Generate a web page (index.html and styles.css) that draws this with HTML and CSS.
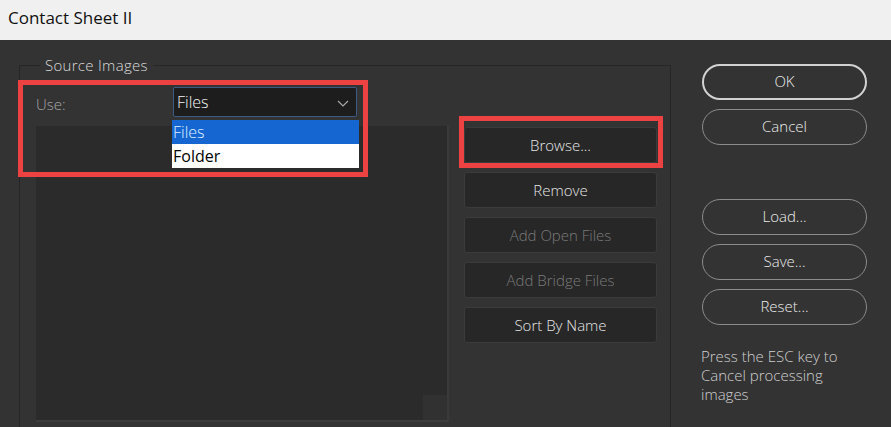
FILE: index.html
```html
<!DOCTYPE html>
<html>
<head>
<meta charset="utf-8">
<title>Contact Sheet II</title>
<link rel="stylesheet" href="styles.css">
</head>
<body>
<div class="titlebar">Contact Sheet II</div>
<div class="dialog">
  <fieldset class="group">
    <legend class="legend">Source Images</legend>
    <div class="group-grid">
      <div class="use-row">
        <span class="use-label">Use:</span>
        <div class="select">
          <span class="select-value">Files</span>
          <svg class="chevron" width="12" height="7" viewBox="0 0 12 7"><polyline points="1,1 6,6 11,1" fill="none" stroke="#a8a8a8" stroke-width="1.2"/></svg>
          <div class="menu">
            <div class="menu-item selected">Files</div>
            <div class="menu-item">Folder</div>
          </div>
        </div>
      </div>
      <div class="spacer"></div>
      <div class="listbox"><div class="corner"></div></div>
      <div class="buttons">
        <button class="btn">Browse...</button>
        <button class="btn">Remove</button>
        <button class="btn disabled">Add Open Files</button>
        <button class="btn disabled">Add Bridge Files</button>
        <button class="btn">Sort By Name</button>
      </div>
    </div>
  </fieldset>
  <div class="side">
    <button class="pill primary">OK</button>
    <button class="pill">Cancel</button>
    <button class="pill gap">Load...</button>
    <button class="pill">Save...</button>
    <button class="pill">Reset...</button>
    <p class="help">Press the ESC key to Cancel processing images</p>
  </div>
  <div class="mark mark-use"></div>
  <div class="mark mark-browse"></div>
</div>
</body>
</html>
```
FILE: styles.css
```css
* { box-sizing: border-box; }
html, body { margin: 0; padding: 0; overflow: hidden; }
body {
  width: 891px;
  height: 427px;
  font-family: "Open Sans", "Noto Sans", sans-serif;
  font-weight: 300;
  background: #333333;
}
.titlebar {
  height: 40px;
  background: #f0f0f0;
  color: #111;
  font-size: 17px;
  font-weight: 400;
  line-height: 36px;
  padding-left: 8px;
}
.dialog {
  position: relative;
  height: 387px;
  overflow: hidden;
  background: #333333;
  display: flex;
  align-items: flex-start;
}
.group {
  margin: 15px 0 0 19px;
  width: 652px;
  height: 372px;
  border: 1px solid #262626;
  border-bottom: none;
  padding: 12px 12px 0 16px;
  min-width: 0;
}
.legend {
  margin-left: 4px;
  padding: 0 5px;
  font-size: 15px;
  line-height: 20px;
  letter-spacing: 0.3px;
  color: #dcdcdc;
}
.group-grid {
  display: grid;
  grid-template-columns: 413px 193px;
  grid-template-rows: 30px 296px;
  column-gap: 15px;
  row-gap: 9px;
}
.use-row {
  display: flex;
  align-items: center;
}
.use-label {
  width: 137px;
  font-size: 15px;
  color: #a8a8a8;
  margin-top: 4px;
}
.select {
  position: relative;
  width: 184px;
  height: 30px;
  background: #1d1d1d;
  border: 1px solid #3e5a86;
  border-radius: 2px;
  display: flex;
  align-items: center;
  justify-content: space-between;
  padding: 0 7px 0 3px;
}
.select-value {
  color: #f4f4f4;
  font-size: 16px;
}
.chevron { margin-top: 2px; }
.menu {
  position: absolute;
  left: -2px;
  top: 32px;
  width: 187px;
  background: #fff;
  z-index: 2;
}
.menu-item {
  height: 24px;
  line-height: 24px;
  padding-left: 1px;
  font-size: 16px;
  font-weight: 400;
  color: #000;
}
.menu-item.selected {
  background: #1666d1;
  color: #dff2ff;
  font-weight: 300;
}
.listbox {
  position: relative;
  background: #2b2b2b;
  border-bottom: 2px solid #3c3c3c;
  border-right: 2px solid #3a3a3a;
}
.corner {
  position: absolute;
  right: 0;
  bottom: 0;
  width: 24px;
  height: 25px;
  background: #313131;
}
.buttons {
  display: flex;
  flex-direction: column;
  gap: 9px;
  margin-top: 1px;
}
.btn {
  height: 36px;
  background: #272727;
  border: 1px solid #3b3b3b;
  border-radius: 3px;
  color: #e6e6e6;
  font-family: inherit;
  font-weight: inherit;
  font-size: 15px;
  padding: 0;
}
.btn.disabled { color: #7a7a7a; }
.side {
  margin-left: 31px;
  padding-top: 24px;
  width: 165px;
  display: flex;
  flex-direction: column;
  gap: 9px;
}
.pill {
  height: 36px;
  border-radius: 18px;
  background: transparent;
  border: 1.5px solid #8c8c8c;
  color: #ececec;
  font-family: inherit;
  font-weight: inherit;
  font-size: 15px;
  padding: 0 0 2px 0;
}
.pill.primary { border: 2px solid #d2d2d2; }
.pill.gap { margin-top: 45px; }
.help {
  margin: 13px 0 0 -1px;
  width: 160px;
  font-size: 15px;
  line-height: 19px;
  color: #cfcfcf;
}
.mark {
  position: absolute;
  border: 5px solid #ec4242;
  z-index: 3;
  pointer-events: none;
}
.mark-use { left: 18px; top: 40px; width: 350px; height: 97px; }
.mark-browse { left: 459px; top: 76px; width: 204px; height: 52px; }
```
